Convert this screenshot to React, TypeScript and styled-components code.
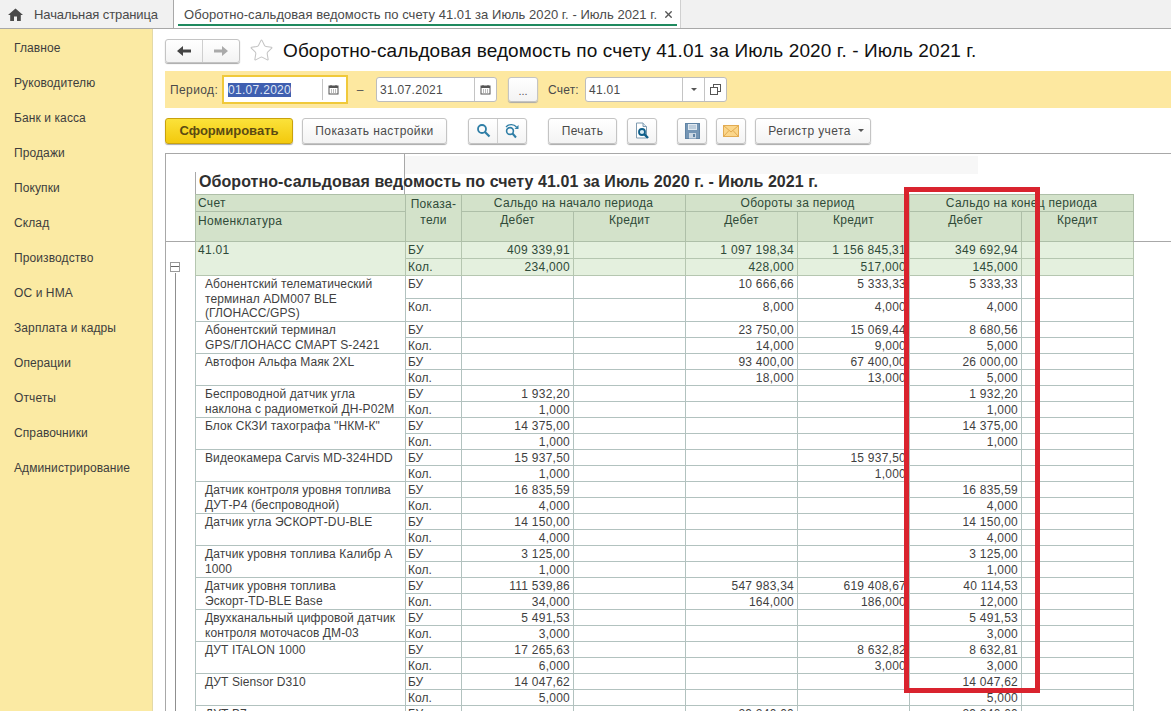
import { Fragment } from 'react';
import styled, { createGlobalStyle } from 'styled-components';
import { Star, X } from 'lucide-react';

const GlobalStyle = createGlobalStyle`
  html, body {
    margin: 0;
    padding: 0;
    background: #fff;
  }
  body {
    font-family: "Liberation Sans", Arial, sans-serif;
    color: #3a3a3a;
  }
`;

const menu = [
  'Главное',
  'Руководителю',
  'Банк и касса',
  'Продажи',
  'Покупки',
  'Склад',
  'Производство',
  'ОС и НМА',
  'Зарплата и кадры',
  'Операции',
  'Отчеты',
  'Справочники',
  'Администрирование',
];

type Row = {
  name: string[];
  tall?: boolean;
  bu: string[];
  qty: string[];
};

const rows: Row[] = [
  {
    name: ['Абонентский телематический', 'терминал ADM007 BLE', '(ГЛОНАСС/GPS)'],
    tall: true,
    bu: ['', '', '10 666,66', '5 333,33', '5 333,33', ''],
    qty: ['', '', '8,000', '4,000', '4,000', ''],
  },
  {
    name: ['Абонентский терминал', 'GPS/ГЛОНАСС СМАРТ S-2421'],
    bu: ['', '', '23 750,00', '15 069,44', '8 680,56', ''],
    qty: ['', '', '14,000', '9,000', '5,000', ''],
  },
  {
    name: ['Автофон Альфа Маяк 2XL'],
    bu: ['', '', '93 400,00', '67 400,00', '26 000,00', ''],
    qty: ['', '', '18,000', '13,000', '5,000', ''],
  },
  {
    name: ['Беспроводной датчик угла', 'наклона с радиометкой ДН-Р02М'],
    bu: ['1 932,20', '', '', '', '1 932,20', ''],
    qty: ['1,000', '', '', '', '1,000', ''],
  },
  {
    name: ['Блок СКЗИ тахографа "НКМ-К"'],
    bu: ['14 375,00', '', '', '', '14 375,00', ''],
    qty: ['1,000', '', '', '', '1,000', ''],
  },
  {
    name: ['Видеокамера Carvis MD-324HDD'],
    bu: ['15 937,50', '', '', '15 937,50', '', ''],
    qty: ['1,000', '', '', '1,000', '', ''],
  },
  {
    name: ['Датчик контроля уровня топлива', 'ДУТ-Р4 (беспроводной)'],
    bu: ['16 835,59', '', '', '', '16 835,59', ''],
    qty: ['4,000', '', '', '', '4,000', ''],
  },
  {
    name: ['Датчик угла ЭСКОРТ-DU-BLE'],
    bu: ['14 150,00', '', '', '', '14 150,00', ''],
    qty: ['4,000', '', '', '', '4,000', ''],
  },
  {
    name: ['Датчик уровня топлива Калибр А', '1000'],
    bu: ['3 125,00', '', '', '', '3 125,00', ''],
    qty: ['1,000', '', '', '', '1,000', ''],
  },
  {
    name: ['Датчик уровня топлива', 'Эскорт-TD-BLE Base'],
    bu: ['111 539,86', '', '547 983,34', '619 408,67', '40 114,53', ''],
    qty: ['34,000', '', '164,000', '186,000', '12,000', ''],
  },
  {
    name: ['Двухканальный цифровой датчик', 'контроля моточасов ДМ-03'],
    bu: ['5 491,53', '', '', '', '5 491,53', ''],
    qty: ['3,000', '', '', '', '3,000', ''],
  },
  {
    name: ['ДУТ ITALON 1000'],
    bu: ['17 265,63', '', '', '8 632,82', '8 632,81', ''],
    qty: ['6,000', '', '', '3,000', '3,000', ''],
  },
  {
    name: ['ДУТ Siensor D310'],
    bu: ['14 047,62', '', '', '', '14 047,62', ''],
    qty: ['5,000', '', '', '', '5,000', ''],
  },
  {
    name: ['ДУТ В7'],
    bu: ['', '', '29 240,00', '', '29 240,00', ''],
    qty: ['', '', '', '', '', ''],
  },
];

const CalendarIcon = () => (
  <svg width="11" height="11" viewBox="0 0 11 11">
    <rect x="1" y="2" width="9" height="8" fill="none" stroke="#555" />
    <rect x="1" y="2" width="9" height="2" fill="#555" />
    <path d="M3 1v2M8 1v2" stroke="#555" />
    <path d="M3 6h1M5 6h1M7 6h1M3 8h1M5 8h1M7 8h1" stroke="#777" />
  </svg>
);

const HomeIcon = () => (
  <svg width="15" height="13" viewBox="0 0 15 13">
    <path d="M7.5 0.5 L15 7 H12.8 V13 H9 V8.5 H6 V13 H2.2 V7 H0 Z" fill="#4a4a4a" />
  </svg>
);

const ArrowIcon = ({ dir, color }: { dir: 'left' | 'right'; color: string }) => (
  <svg width="14" height="10" viewBox="0 0 14 10">
    <path
      d={dir === 'left' ? 'M0 5 L6 0 V3.5 H14 V6.5 H6 V10 Z' : 'M14 5 L8 0 V3.5 H0 V6.5 H8 V10 Z'}
      fill={color}
    />
  </svg>
);

const SearchIcon = () => (
  <svg width="15" height="15" viewBox="0 0 15 15">
    <circle cx="6" cy="6" r="4" fill="none" stroke="#2f7ea6" strokeWidth="1.8" />
    <path d="M9 9 L13.5 13.5" stroke="#2f7ea6" strokeWidth="2.2" />
  </svg>
);

const SearchNextIcon = () => (
  <svg width="16" height="16" viewBox="0 0 16 16">
    <circle cx="6" cy="8" r="3.4" fill="none" stroke="#2f7ea6" strokeWidth="1.6" />
    <path d="M8.5 10.5 L12 14.5" stroke="#2f7ea6" strokeWidth="2" />
    <path d="M2 4 C5 0.5 10 1 12.5 4" fill="none" stroke="#2f7ea6" strokeWidth="1.3" />
    <path d="M14.5 2 V6 H10.5 Z" fill="#2f7ea6" />
  </svg>
);

const PreviewIcon = () => (
  <svg width="16" height="18" viewBox="0 0 16 18">
    <path d="M2.5 1 H9 L12.5 4.5 V16 H2.5 Z" fill="#fff" stroke="#7f9bb0" />
    <path d="M9 1 V4.5 H12.5" fill="#dbe6ee" stroke="#7f9bb0" />
    <circle cx="8" cy="10" r="3" fill="#d8ecf5" stroke="#0f5f8a" strokeWidth="1.8" />
    <path d="M10.2 12.2 L14 16" stroke="#0f5f8a" strokeWidth="2.4" />
  </svg>
);

const SaveIcon = () => (
  <svg width="15" height="16" viewBox="0 0 15 16">
    <rect x="0.5" y="0.5" width="14" height="15" fill="#7495b4" stroke="#5f83a4" />
    <rect x="3" y="1" width="9" height="6" fill="#dfe8f0" />
    <path d="M4 3h7M4 5h7" stroke="#9ab1c6" />
    <rect x="4" y="10" width="7" height="5.5" fill="#c9d6e2" />
    <rect x="8" y="11" width="2" height="3" fill="#5f83a4" />
  </svg>
);

const MailIcon = () => (
  <svg width="16" height="12" viewBox="0 0 16 12">
    <rect x="0.5" y="0.5" width="15" height="11" fill="#fbd68a" stroke="#e2ab52" />
    <path d="M0.5 0.5 L8 7 L15.5 0.5 M0.5 11.5 L6 5.5 M15.5 11.5 L10 5.5" fill="none" stroke="#e2ab52" />
  </svg>
);

const OpenIcon = () => (
  <svg width="11" height="11" viewBox="0 0 11 11">
    <rect x="3.5" y="0.5" width="7" height="7" fill="#fff" stroke="#555" />
    <rect x="0.5" y="3.5" width="7" height="7" fill="#fff" stroke="#555" />
  </svg>
);

const App = () => {
  return (
    <Page>
      <GlobalStyle />
      <TabBar>
        <HomeTab>
          <HomeIcon />
          <span>Начальная страница</span>
        </HomeTab>
        <ActiveTab>
          <span>Оборотно-сальдовая ведомость по счету 41.01 за Июль 2020 г. - Июль 2021 г.</span>
          <X size={11} strokeWidth={3} color="#555" />
        </ActiveTab>
      </TabBar>
      <Body>
        <Sidebar>
          {menu.map((item) => (
            <MenuItem key={item}>{item}</MenuItem>
          ))}
        </Sidebar>
        <Main>
          <TitleRow>
            <ButtonGroup $width={75} $height={24}>
              <GroupPart>
                <ArrowIcon dir="left" color="#444" />
              </GroupPart>
              <GroupPart>
                <ArrowIcon dir="right" color="#aaa" />
              </GroupPart>
            </ButtonGroup>
            <StarBox>
              <Star size={25} strokeWidth={1} color="#c4c4c4" />
            </StarBox>
            <PageTitle>Оборотно-сальдовая ведомость по счету 41.01 за Июль 2020 г. - Июль 2021 г.</PageTitle>
          </TitleRow>

          <FilterBar>
            <FilterLabel>Период:</FilterLabel>
            <FocusRing>
              <Field $width={122}>
                <FieldValue>
                  <Selected>01.07.2020</Selected>
                </FieldValue>
                <FieldAddon $width={21}>
                  <CalendarIcon />
                </FieldAddon>
              </Field>
            </FocusRing>
            <Dash>–</Dash>
            <Field $width={121}>
              <FieldValue>31.07.2021</FieldValue>
              <FieldAddon $width={21}>
                <CalendarIcon />
              </FieldAddon>
            </Field>
            <DotsButton>...</DotsButton>
            <AccountLabel>Счет:</AccountLabel>
            <Field $width={142}>
              <FieldValue>41.01</FieldValue>
              <FieldAddon $width={21}>
                <Caret />
              </FieldAddon>
              <FieldAddon $width={21}>
                <OpenIcon />
              </FieldAddon>
            </Field>
          </FilterBar>

          <Toolbar>
            <PrimaryButton>Сформировать</PrimaryButton>
            <ToolButton $width={145} $ml={9}>
              Показать настройки
            </ToolButton>
            <ButtonGroup $width={59} $height={26} $ml={21}>
              <GroupPart>
                <SearchIcon />
              </GroupPart>
              <GroupPart>
                <SearchNextIcon />
              </GroupPart>
            </ButtonGroup>
            <ToolButton $width={69} $ml={21}>
              Печать
            </ToolButton>
            <ToolButton $width={30} $ml={10}>
              <PreviewIcon />
            </ToolButton>
            <ToolButton $width={30} $ml={20}>
              <SaveIcon />
            </ToolButton>
            <ToolButton $width={30} $ml={9}>
              <MailIcon />
            </ToolButton>
            <ToolButton $width={116} $ml={9} $pl={6}>
              Регистр учета
              <Caret $ml={7} />
            </ToolButton>
          </Toolbar>

          <Report>
            <Gutter>
              <FrozenCorner />
              <MinusBox />
              <TreeLine />
            </Gutter>
            <Sheet>
              <Banner>
                <BannerLeft>
                  <BannerBlank />
                  <ReportTitle>Оборотно-сальдовая ведомость по счету 41.01 за Июль 2020 г. - Июль 2021 г.</ReportTitle>
                </BannerLeft>
                <BannerRight>
                  <BannerGrey />
                </BannerRight>
              </Banner>
              <Grid>
                <colgroup>
                  <col style={{ width: 210 }} />
                  <col style={{ width: 56 }} />
                  <col style={{ width: 112 }} />
                  <col style={{ width: 112 }} />
                  <col style={{ width: 112 }} />
                  <col style={{ width: 112 }} />
                  <col style={{ width: 112 }} />
                  <col style={{ width: 112 }} />
                </colgroup>
                <thead>
                  <HeadRow $height={17}>
                    <HeadCell $left>Счет</HeadCell>
                    <HeadCell rowSpan={2} $indicator>
                      Показа-
                      <br />
                      тели
                    </HeadCell>
                    <HeadCell colSpan={2}>Сальдо на начало периода</HeadCell>
                    <HeadCell colSpan={2}>Обороты за период</HeadCell>
                    <HeadCell colSpan={2}>Сальдо на конец периода</HeadCell>
                  </HeadRow>
                  <HeadRow $height={30}>
                    <HeadCell $left $lower>
                      Номенклатура
                    </HeadCell>
                    <HeadCell>Дебет</HeadCell>
                    <HeadCell>Кредит</HeadCell>
                    <HeadCell>Дебет</HeadCell>
                    <HeadCell>Кредит</HeadCell>
                    <HeadCell>Дебет</HeadCell>
                    <HeadCell>Кредит</HeadCell>
                  </HeadRow>
                </thead>
                <tbody>
                  <tr>
                    <GroupCell rowSpan={2}>41.01</GroupCell>
                    <GroupCell>БУ</GroupCell>
                    <GroupCell $num>409 339,91</GroupCell>
                    <GroupCell $num />
                    <GroupCell $num>1 097 198,34</GroupCell>
                    <GroupCell $num>1 156 845,31</GroupCell>
                    <GroupCell $num>349 692,94</GroupCell>
                    <GroupCell $num />
                  </tr>
                  <tr>
                    <GroupCell>Кол.</GroupCell>
                    <GroupCell $num>234,000</GroupCell>
                    <GroupCell $num />
                    <GroupCell $num>428,000</GroupCell>
                    <GroupCell $num>517,000</GroupCell>
                    <GroupCell $num>145,000</GroupCell>
                    <GroupCell $num />
                  </tr>
                  {rows.map((row) => (
                    <Fragment key={row.name.join(' ')}>
                      <DataRow $tall={row.tall}>
                        <NameCell rowSpan={2}>
                          {row.name.map((line) => (
                            <NameLine key={line}>{line}</NameLine>
                          ))}
                        </NameCell>
                        <KindCell>БУ</KindCell>
                        {row.bu.map((value, i) => (
                          <NumCell key={i}>{value}</NumCell>
                        ))}
                      </DataRow>
                      <DataRow $tall={row.tall}>
                        <KindCell>Кол.</KindCell>
                        {row.qty.map((value, i) => (
                          <NumCell key={i}>{value}</NumCell>
                        ))}
                      </DataRow>
                    </Fragment>
                  ))}
                </tbody>
              </Grid>
            </Sheet>
            <RightEdge>
              <FrozenCorner />
            </RightEdge>
          </Report>
        </Main>
      </Body>
      <Highlight />
    </Page>
  );
};

export default App;

const Page = styled.div`
  position: relative;
  display: flex;
  flex-direction: column;
  width: 1171px;
  height: 711px;
  overflow: hidden;
`;

const TabBar = styled.div`
  display: flex;
  flex: none;
  height: 28px;
  background: #f1f1f1;
  border-bottom: 1px solid #a8a8a8;
`;

const HomeTab = styled.div`
  display: flex;
  align-items: center;
  gap: 11px;
  width: 174px;
  padding-left: 8px;
  box-sizing: border-box;
  border-right: 1px solid #a8a8a8;
  font-size: 13px;
  letter-spacing: -0.1px;
  color: #4a4a4a;
`;

const ActiveTab = styled.div`
  position: relative;
  display: flex;
  align-items: center;
  gap: 6px;
  width: 507px;
  padding-left: 10px;
  box-sizing: border-box;
  background: #fff;
  border-right: 1px solid #d0d0d0;
  font-size: 13px;
  letter-spacing: 0.05px;
  color: #4a4a4a;

  &::after {
    content: '';
    position: absolute;
    left: 4px;
    right: 3px;
    bottom: 2px;
    height: 2px;
    background: #1f8a5f;
  }
`;

const Body = styled.div`
  display: flex;
  flex: 1;
  min-height: 0;
`;

const Sidebar = styled.nav`
  flex: none;
  width: 153px;
  padding-top: 2px;
  box-sizing: border-box;
  background: #fbeaa3;
  border-right: 1px solid #e3d9a8;
`;

const MenuItem = styled.div`
  height: 35px;
  padding-left: 14px;
  font-size: 12px;
  line-height: 35px;
  letter-spacing: 0.1px;
  color: #3d3d3d;
`;

const Main = styled.main`
  display: flex;
  flex: 1;
  flex-direction: column;
  min-width: 0;
  padding-left: 12px;
`;

const TitleRow = styled.div`
  display: flex;
  flex: none;
  align-items: center;
  height: 42px;
  padding-top: 1px;
  box-sizing: border-box;
`;

const ButtonGroup = styled.div<{ $width: number; $height: number; $ml?: number }>`
  display: flex;
  flex: none;
  width: ${(p) => p.$width}px;
  height: ${(p) => p.$height}px;
  margin-left: ${(p) => p.$ml ?? 0}px;
  box-sizing: border-box;
  background: linear-gradient(#fff, #f3f3f3);
  border: 1px solid #c4c4c4;
  border-radius: 3px;
  box-shadow: 0 1px 1px #a9a9a9;
`;

const GroupPart = styled.div`
  display: flex;
  flex: 1;
  align-items: center;
  justify-content: center;

  & + & {
    border-left: 1px solid #cfcfcf;
  }
`;

const StarBox = styled.div`
  display: flex;
  flex: none;
  align-items: center;
  margin: 0 9px 0 9px;
`;

const PageTitle = styled.h1`
  margin: 0;
  font-size: 19px;
  font-weight: 400;
  letter-spacing: 0.1px;
  white-space: nowrap;
  color: #111;
`;

const FilterBar = styled.div`
  display: flex;
  flex: none;
  align-items: center;
  height: 37px;
  padding-left: 5px;
  background: #fde8a0;
  font-size: 12px;
`;

const FilterLabel = styled.span`
  width: 52px;
  letter-spacing: 0.4px;
  color: #4a4a4a;
`;

const AccountLabel = styled.span`
  width: 37px;
  margin-left: 10px;
  letter-spacing: 0.2px;
  color: #4a4a4a;
`;

const FocusRing = styled.div`
  flex: none;
  padding: 2px;
  background: #fff;
  border: 2px solid #f0c93a;
`;

const Field = styled.div<{ $width: number }>`
  display: flex;
  flex: none;
  width: ${(p) => p.$width}px;
  height: 25px;
  box-sizing: border-box;
  background: #fff;
  border: 1px solid #bdbdbd;
  border-radius: 3px;

  ${FocusRing} & {
    width: 118px;
    height: 21px;
    border: 0;
  }
`;

const FieldValue = styled.div`
  display: flex;
  flex: 1;
  align-items: center;
  padding-left: 3px;
  font-size: 12px;
  letter-spacing: 0.3px;
  color: #4a4a4a;

  ${FocusRing} & {
    padding-left: 2px;
  }
`;

const Selected = styled.span`
  background: #3f5fb0;
  color: #dfe6f5;
`;

const FieldAddon = styled.div<{ $width: number }>`
  display: flex;
  flex: none;
  align-items: center;
  justify-content: center;
  width: ${(p) => p.$width}px;
  border-left: 1px solid #c4c4c4;
`;

const Dash = styled.span`
  flex: none;
  width: 28px;
  padding-right: 4px;
  box-sizing: border-box;
  text-align: center;
  color: #555;
`;

const DotsButton = styled.div`
  flex: none;
  width: 30px;
  height: 25px;
  margin-left: 11px;
  box-sizing: border-box;
  background: linear-gradient(#fff, #f3f3f3);
  border: 1px solid #c4c4c4;
  border-radius: 3px;
  box-shadow: 0 1px 1px #a9a9a9;
  text-align: center;
  font-size: 11px;
  line-height: 26px;
  color: #555;
`;

const Caret = styled.span<{ $ml?: number }>`
  display: inline-block;
  width: 0;
  height: 0;
  margin-left: ${(p) => p.$ml ?? 0}px;
  border-top: 3px solid #555;
  border-left: 3px solid transparent;
  border-right: 3px solid transparent;
`;

const Toolbar = styled.div`
  display: flex;
  flex: none;
  align-items: center;
  height: 45px;
  padding: 1px 0;
  box-sizing: border-box;
`;

const PrimaryButton = styled.div`
  flex: none;
  width: 128px;
  height: 26px;
  box-sizing: border-box;
  background: linear-gradient(#fbe23a, #f3c90d);
  border: 1px solid #c9a20d;
  border-radius: 3px;
  box-shadow: 0 1px 1px #a9a9a9;
  text-align: center;
  font-size: 13px;
  font-weight: 700;
  line-height: 24px;
  color: #5b4a12;
`;

const ToolButton = styled.div<{ $width: number; $ml?: number; $pl?: number }>`
  display: flex;
  flex: none;
  align-items: center;
  justify-content: center;
  width: ${(p) => p.$width}px;
  height: 26px;
  margin-left: ${(p) => p.$ml ?? 0}px;
  padding-left: ${(p) => p.$pl ?? 0}px;
  box-sizing: border-box;
  background: linear-gradient(#fff, #f3f3f3);
  border: 1px solid #c4c4c4;
  border-radius: 3px;
  box-shadow: 0 1px 1px #a9a9a9;
  font-size: 12px;
  letter-spacing: 0.4px;
  color: #4a4a4a;
`;

const Report = styled.div`
  display: flex;
  flex: 1;
  min-height: 0;
  border-top: 1px solid #a8a8a8;
`;

const Gutter = styled.div`
  position: relative;
  flex: none;
  width: 30px;
  box-sizing: border-box;
  border-left: 1px solid #a8a8a8;
`;

const FrozenCorner = styled.div`
  height: 87px;
  border-bottom: 1px solid #a8a8a8;
`;

const MinusBox = styled.div`
  position: absolute;
  top: 108px;
  left: 4px;
  width: 8px;
  height: 8px;
  background: linear-gradient(#ffffff 0 3.5px, #666 3.5px 4.5px, #ffffff 4.5px);
  border: 1px solid #9a9a9a;
`;

const TreeLine = styled.div`
  position: absolute;
  top: 119px;
  bottom: 0;
  left: 9px;
  width: 1px;
  background: #8f8f8f;
`;

const Sheet = styled.div`
  flex: none;
  width: 938px;
`;

const Banner = styled.div`
  display: flex;
  height: 40px;
`;

const BannerLeft = styled.div`
  flex: none;
  width: 210px;
  box-sizing: border-box;
  border-right: 1px solid #a8a8a8;
`;

const BannerBlank = styled.div`
  height: 18px;
  background: #fff;
`;

const ReportTitle = styled.div`
  width: 700px;
  height: 22px;
  padding: 1px 0 0 3px;
  box-sizing: border-box;
  border-left: 1px solid #a8a8a8;
  font-size: 16px;
  font-weight: 700;
  line-height: 18px;
  white-space: nowrap;
  letter-spacing: 0.07px;
  color: #2f2f2f;
`;

const BannerRight = styled.div`
  flex: 1;
`;

const BannerGrey = styled.div`
  width: 573px;
  height: 18px;
  margin-top: 2px;
  background: #f7f7f7;
`;

const Grid = styled.table`
  width: 938px;
  table-layout: fixed;
  border-collapse: collapse;
  font-size: 12px;
`;

const HeadRow = styled.tr<{ $height: number }>`
  height: ${(p) => p.$height}px;
`;

const HeadCell = styled.th<{ $left?: boolean; $indicator?: boolean; $lower?: boolean }>`
  padding: ${(p) => (p.$indicator ? '1px 0 0' : p.$left ? '0 2px' : '0 3px')};
  padding-top: ${(p) => (p.$lower || p.$indicator ? 1 : 0)}px;
  box-sizing: border-box;
  background: #d3e2ca;
  border: 1px solid #aebfa8;
  vertical-align: top;
  text-align: ${(p) => (p.$left ? 'left' : 'center')};
  font-weight: 400;
  line-height: 16px;
  letter-spacing: 0.3px;
  color: #2f4a38;
`;

const GroupCell = styled.td<{ $num?: boolean }>`
  height: 17px;
  padding: 0 3px 0 2px;
  box-sizing: border-box;
  background: #e4f0de;
  border: 1px solid #b5c6b0;
  vertical-align: top;
  text-align: ${(p) => (p.$num ? 'right' : 'left')};
  line-height: 16px;
  letter-spacing: 0.3px;
  color: #2f4a38;
`;

const DataRow = styled.tr<{ $tall?: boolean }>`
  height: ${(p) => (p.$tall ? 23 : 16)}px;
`;

const NameCell = styled.td`
  padding: 1px 3px 0 9px;
  border: 1px solid #b2c2bf;
  vertical-align: top;
  line-height: 14.5px;
  color: #3f3f3f;
  overflow: hidden;
`;

const NameLine = styled.div`
  white-space: nowrap;
  letter-spacing: 0.1px;
`;

const KindCell = styled.td`
  padding: 2px 3px 0 2px;
  border: 1px solid #b2c2bf;
  vertical-align: top;
  line-height: 13px;
  color: #3f3f3f;
`;

const NumCell = styled.td`
  padding: 2px 3px 0 0;
  border: 1px solid #b2c2bf;
  vertical-align: top;
  text-align: right;
  line-height: 13px;
  letter-spacing: 0.25px;
  white-space: nowrap;
  color: #3f3f3f;
`;

const RightEdge = styled.div`
  flex: 1;
`;

const Highlight = styled.div`
  position: absolute;
  top: 187px;
  left: 904px;
  width: 136px;
  height: 506px;
  box-sizing: border-box;
  border: 5px solid #d9232e;
  pointer-events: none;
`;
